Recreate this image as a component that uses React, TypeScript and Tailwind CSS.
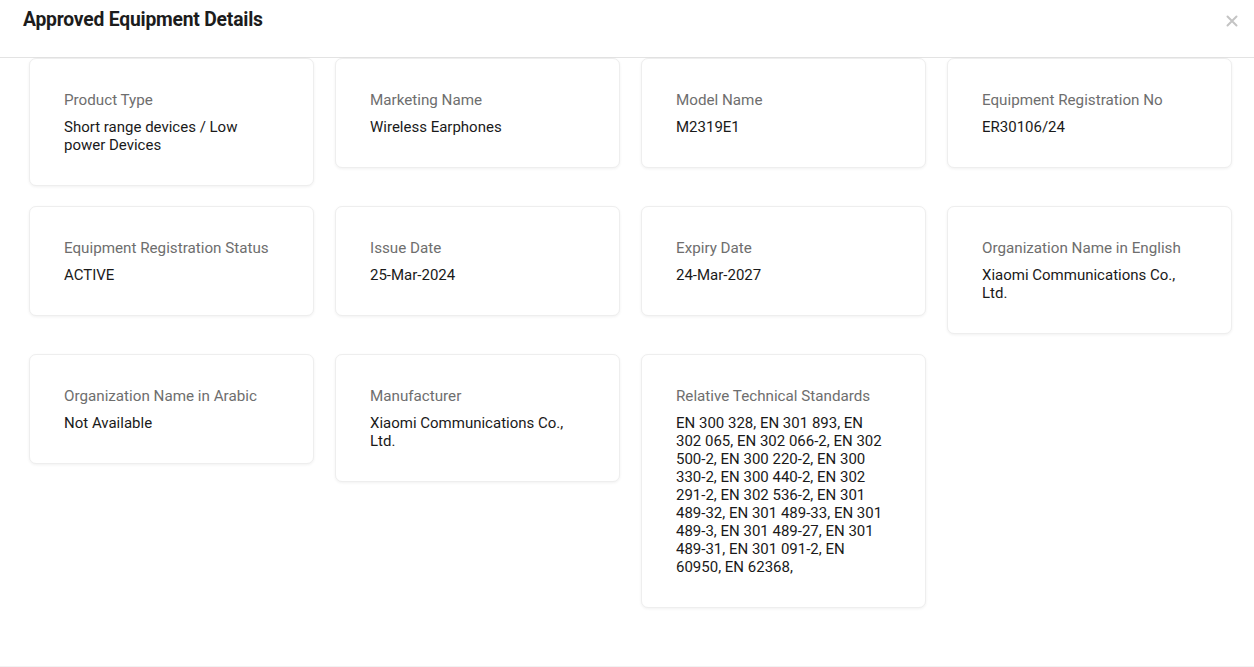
import React from "react";

const items: { label: string; value: string }[] = [
  { label: "Product Type", value: "Short range devices / Low power Devices" },
  { label: "Marketing Name", value: "Wireless Earphones" },
  { label: "Model Name", value: "M2319E1" },
  { label: "Equipment Registration No", value: "ER30106/24" },
  { label: "Equipment Registration Status", value: "ACTIVE" },
  { label: "Issue Date", value: "25-Mar-2024" },
  { label: "Expiry Date", value: "24-Mar-2027" },
  { label: "Organization Name in English", value: "Xiaomi Communications Co., Ltd." },
  { label: "Organization Name in Arabic", value: "Not Available" },
  { label: "Manufacturer", value: "Xiaomi Communications Co., Ltd." },
  {
    label: "Relative Technical Standards",
    value:
      "EN 300 328, EN 301 893, EN 302 065, EN 302 066-2, EN 302 500-2, EN 300 220-2, EN 300 330-2, EN 300 440-2, EN 302 291-2, EN 302 536-2, EN 301 489-32, EN 301 489-33, EN 301 489-3, EN 301 489-27, EN 301 489-31, EN 301 091-2, EN 60950, EN 62368,",
  },
];

export default function App() {
  return (
    <div
      className="w-[1254px] h-[667px] bg-white flex flex-col overflow-hidden"
      style={{ fontFamily: "Roboto, 'Liberation Sans', Arial, sans-serif" }}
    >
      <div className="h-[58px] shrink-0 flex items-center justify-between pl-[23px] pr-[16px] border-b border-[#e3e3e3] pb-[16px]">
        <h1 className="text-[19.3px] font-bold text-[#1c1c1c] tracking-[-0.2px]">
          Approved Equipment Details
        </h1>
        <svg width="12" height="12" viewBox="0 0 12 12">
          <path d="M1.5 1.5 L10.5 10.5 M10.5 1.5 L1.5 10.5" stroke="#c4c4c4" strokeWidth="2" strokeLinecap="round" />
        </svg>
      </div>
      <div className="flex-1 pl-[29px] pr-[22px] border-b border-[#f2f2f2]">
        <div className="grid grid-cols-4 gap-x-[21px] gap-y-[20px] items-start">
          {items.map((it) => (
            <div
              key={it.label}
              className="rounded-[7px] border border-[#eeeeee] bg-white shadow-[0_1px_3px_rgba(0,0,0,0.06)] pl-[34px] pr-[40px] pt-[31px] pb-[31px]"
            >
              <div className="text-[15.2px] leading-[20px] text-[#6e6e6e]">{it.label}</div>
              <div className="mt-[8px] text-[15px] leading-[18px] text-[#1a1a1a]">{it.value}</div>
            </div>
          ))}
        </div>
      </div>
    </div>
  );
}
